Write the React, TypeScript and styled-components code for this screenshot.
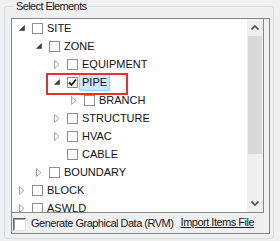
import React from 'react';
import styled, { createGlobalStyle } from 'styled-components';

const GlobalStyle = createGlobalStyle`
  html, body {
    margin: 0;
    padding: 0;
    background: #f0f0f0;
  }
  body {
    font-family: "Liberation Sans", Arial, sans-serif;
    font-size: 11px;
    color: #1a1a1a;
  }
`;

const Window = styled.div`
  width: 280px;
  height: 241px;
  box-sizing: border-box;
  padding: 6px 6px 0 4px;
  overflow: hidden;
`;

const GroupBox = styled.div`
  position: relative;
  box-sizing: border-box;
  height: 233px;
  border: 1px solid #d5dbe0;
  border-radius: 3px;
  padding: 11px 3px 0 6px;
`;

const GroupTitle = styled.span`
  position: absolute;
  top: -7px;
  left: 9px;
  padding: 0 2px;
  background: #f0f0f0;
  line-height: 13px;
  letter-spacing: -0.6px;
`;

const Panel = styled.div`
  box-sizing: border-box;
  height: 216px;
  border: 1px solid #828790;
  display: flex;
  flex-direction: column;
`;

const TreeBox = styled.div`
  height: 193px;
  margin-right: 5px;
  border-right: 1px solid #828790;
  border-bottom: 1px solid #828790;
  background: #fff;
  display: flex;
  overflow: hidden;
`;

const TreeList = styled.div`
  position: relative;
  flex: 1;
  overflow: hidden;
`;

const Row = styled.div<{ $level: number }>`
  position: relative;
  height: 18px;
  display: flex;
  align-items: center;
  padding-left: ${(p) => 4 + Math.round(p.$level * 17.33)}px;
  white-space: nowrap;
`;

const Expander = styled.span`
  width: 12px;
  height: 18px;
  display: flex;
  align-items: center;
  justify-content: center;
  margin-right: 4px;
`;

const Box = styled.span`
  width: 11px;
  height: 11px;
  box-sizing: border-box;
  border: 1px solid #8f8f8f;
  background: #fff;
  display: flex;
  align-items: center;
  justify-content: center;
`;

const Label = styled.span<{ $selected?: boolean }>`
  margin-left: 1px;
  padding: 0 2px;
  height: 16px;
  line-height: 16px;
  border: 1px solid ${(p) => (p.$selected ? '#99d1ff' : 'transparent')};
  border-radius: 2px;
  background: ${(p) => (p.$selected ? '#cce8ff' : 'transparent')};
  color: #111;
`;

const Highlight = styled.span`
  position: absolute;
  left: 34px;
  top: 0;
  width: 82px;
  height: 22px;
  box-sizing: border-box;
  border: 2px solid #e8302f;
  pointer-events: none;
`;

const ScrollBar = styled.div`
  width: 16px;
  display: flex;
  flex-direction: column;
  background: #f0f0f0;
`;

const ScrollButton = styled.div`
  height: 17px;
  display: flex;
  align-items: center;
  justify-content: center;
  background: #f0f0f0;
`;

const Thumb = styled.div`
  height: 118px;
  margin: 0 1px;
  background: #dadada;
`;

const Track = styled.div`
  flex: 1;
`;

const Footer = styled.div`
  flex: 1;
  display: flex;
  align-items: center;
  padding: 0 15px 0 1px;
`;

const BigBox = styled.span`
  width: 13px;
  height: 13px;
  box-sizing: border-box;
  border-top: 1px solid #646464;
  border-left: 1px solid #646464;
  border-right: 1px solid #e3e3e3;
  border-bottom: 1px solid #e3e3e3;
  box-shadow: inset 1px 1px 0 #a0a0a0;
  background: #fff;
  margin-top: 2px;
`;

const FooterText = styled.span`
  margin-left: 5px;
  letter-spacing: -0.5px;
`;

const Link = styled.span`
  margin-left: auto;
  text-decoration: underline;
  letter-spacing: -0.5px;
  margin-bottom: 2px;
`;

type Node = {
  name: string;
  level: number;
  expander: 'open' | 'closed' | 'none';
  checked?: boolean;
  selected?: boolean;
};

const nodes: Node[] = [
  { name: 'SITE', level: 0, expander: 'open' },
  { name: 'ZONE', level: 1, expander: 'open' },
  { name: 'EQUIPMENT', level: 2, expander: 'closed' },
  { name: 'PIPE', level: 2, expander: 'open', checked: true, selected: true },
  { name: 'BRANCH', level: 3, expander: 'closed' },
  { name: 'STRUCTURE', level: 2, expander: 'closed' },
  { name: 'HVAC', level: 2, expander: 'closed' },
  { name: 'CABLE', level: 2, expander: 'none' },
  { name: 'BOUNDARY', level: 1, expander: 'closed' },
  { name: 'BLOCK', level: 0, expander: 'closed' },
  { name: 'ASWLD', level: 0, expander: 'closed' },
];

function ExpanderIcon({ kind }: { kind: Node['expander'] }) {
  if (kind === 'open') {
    return (
      <svg width="6" height="6" viewBox="0 0 6 6">
        <path d="M5.5 0.5 L5.5 5.5 L0.5 5.5 Z" fill="#3c3c3c" stroke="#3c3c3c" strokeWidth="0.6" />
      </svg>
    );
  }
  if (kind === 'closed') {
    return (
      <svg width="6" height="9" viewBox="0 0 6 9">
        <path d="M0.5 0.5 L5 4.5 L0.5 8.5 Z" fill="none" stroke="#a6a6a6" strokeWidth="1" />
      </svg>
    );
  }
  return null;
}

function App(): JSX.Element {
  return (
    <Window>
      <GlobalStyle />
      <GroupBox>
        <GroupTitle>Select Elements</GroupTitle>
        <Panel>
          <TreeBox>
            <TreeList>
              {nodes.map((it) => (
                <Row key={it.name} $level={it.level}>
                  <Expander>
                    <ExpanderIcon kind={it.expander} />
                  </Expander>
                  <Box>
                    {it.checked && (
                      <svg width="9" height="9" viewBox="0 0 9 9">
                        <path d="M1 4.5 L3.5 7 L8 1.5" fill="none" stroke="#1a1a1a" strokeWidth="1.8" />
                      </svg>
                    )}
                  </Box>
                  <Label $selected={it.selected}>{it.name}</Label>
                  {it.selected && <Highlight />}
                </Row>
              ))}
            </TreeList>
            <ScrollBar>
              <ScrollButton>
                <svg width="8" height="5" viewBox="0 0 8 5">
                  <path d="M0.5 4.5 L4 1 L7.5 4.5" fill="none" stroke="#505050" strokeWidth="1.6" />
                </svg>
              </ScrollButton>
              <Thumb />
              <Track />
              <ScrollButton>
                <svg width="8" height="5" viewBox="0 0 8 5">
                  <path d="M0.5 0.5 L4 4 L7.5 0.5" fill="none" stroke="#505050" strokeWidth="1.6" />
                </svg>
              </ScrollButton>
            </ScrollBar>
          </TreeBox>
          <Footer>
            <BigBox />
            <FooterText>Generate Graphical Data (RVM)</FooterText>
            <Link>Import Items File</Link>
          </Footer>
        </Panel>
      </GroupBox>
    </Window>
  );
}

export default App;
